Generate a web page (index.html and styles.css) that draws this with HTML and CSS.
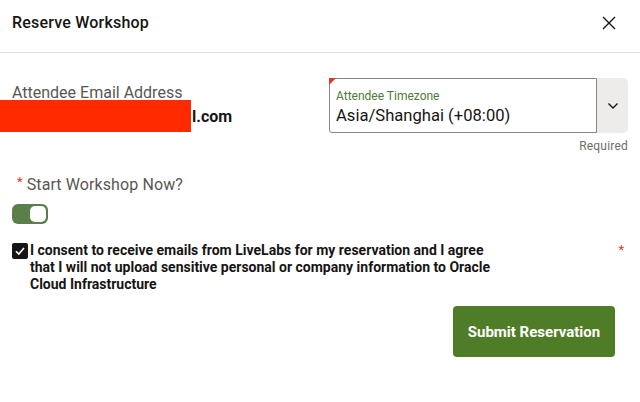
FILE: index.html
```html
<!DOCTYPE html>
<html>
<head>
<meta charset="utf-8">
<link rel="stylesheet" href="styles.css">
</head>
<body>
<div class="dialog">
  <header class="head">
    <h1 class="title">Reserve Workshop</h1>
    <button class="close" aria-label="Close">
      <svg width="16" height="16" viewBox="0 0 16 16"><path d="M2 2 L14 14 M14 2 L2 14" stroke="#161513" stroke-width="1.4" fill="none"/></svg>
    </button>
  </header>
  <div class="body">
    <div class="row1">
      <div class="email">
        <div class="email-label">Attendee Email Address</div>
        <div class="email-value"><span class="redact"></span><span class="email-text">l.com</span></div>
      </div>
      <div class="tz">
        <div class="select">
          <span class="corner"></span>
          <div class="select-main">
            <div class="select-label">Attendee Timezone</div>
            <div class="select-value">Asia/Shanghai (+08:00)</div>
          </div>
          <div class="select-btn">
            <svg width="12" height="8" viewBox="0 0 12 8"><path d="M1.5 1.5 L6 6 L10.5 1.5" stroke="#161513" stroke-width="1.4" fill="none"/></svg>
          </div>
        </div>
        <div class="required">Required</div>
      </div>
    </div>
    <div class="start">
      <div class="start-label"><span class="ast">*</span>Start Workshop Now?</div>
      <div class="toggle"><span class="knob"></span></div>
    </div>
    <div class="consent">
      <span class="check">
        <svg width="16" height="16" viewBox="0 0 16 16"><path d="M4 8.2 L6.8 11 L12 5" stroke="#fff" stroke-width="1.6" fill="none"/></svg>
      </span>
      <div class="consent-text">I consent to receive emails from LiveLabs for my reservation and I agree that I will not upload sensitive personal or company information to Oracle Cloud Infrastructure</div>
      <span class="ast2">*</span>
    </div>
    <div class="actions">
      <button class="submit">Submit Reservation</button>
    </div>
  </div>
</div>
</body>
</html>
```
FILE: styles.css
```css
* { box-sizing: border-box; }
html, body { margin: 0; padding: 0; background: #fff; }
body { font-family: Roboto, "Liberation Sans", sans-serif; color: #161513; width: 640px; height: 402px; overflow: hidden; }
.dialog { display: flex; flex-direction: column; }
.head { height: 53px; border-bottom: 1px solid #e4e1dd; display: flex; align-items: center; justify-content: space-between; padding: 0 12px 7px 12px; }
.title { margin: 0; font-size: 16px; font-weight: 500; letter-spacing: 0.2px; }
.close { border: 0; background: none; padding: 0; width: 16px; height: 16px; margin-right: 11px; display: flex; }
.body { padding: 0 12px; }
.row1 { display: flex; justify-content: space-between; padding-top: 25px; }
.email { padding-top: 5px; }
.email-label { font-size: 16px; color: #5a5752; line-height: 20px; }
.email-value { display: flex; align-items: center; margin-left: -12px; height: 32px; margin-top: -3px; }
.redact { width: 191px; height: 32px; background: #ff2a00; flex: none; }
.email-text { font-weight: 700; font-size: 16px; margin-left: 1px; }
.tz { width: 299px; display: flex; flex-direction: column; align-items: flex-end; }
.select { position: relative; width: 299px; height: 55px; display: flex; }
.corner { position: absolute; left: 0; top: 0; width: 0; height: 0; border-top: 7px solid #d63b25; border-right: 7px solid transparent; }
.select-main { flex: 1; border: 1px solid #8a8782; border-radius: 3px 0 0 3px; padding: 9px 6px 0 6px; }
.select-label { font-size: 12px; color: #4d7a34; line-height: 16px; }
.select-value { font-size: 16.6px; line-height: 22px; margin-top: 1px; }
.select-btn { width: 31px; background: #edecea; border-radius: 0 5px 5px 0; display: flex; align-items: center; justify-content: center; }
.required { font-size: 12px; color: #6f6c67; margin-top: 5px; line-height: 16px; letter-spacing: 0.2px; }
.start { margin-top: 21px; }
.start-label { font-size: 16px; color: #5a5752; line-height: 20px; padding-left: 5px; letter-spacing: 0.1px; }
.ast { color: #d63b25; font-size: 13px; margin-right: 4px; position: relative; top: -4px; }
.toggle { margin-top: 8px; width: 36px; height: 20px; border-radius: 6px; background: #5b7f4a; display: flex; align-items: center; justify-content: flex-end; padding-right: 2px; }
.knob { width: 16px; height: 16px; border-radius: 5px; background: #fff; }
.consent { display: flex; align-items: flex-start; margin-top: 18px; }
.check { width: 16px; height: 16px; background: #161513; border-radius: 2px; flex: none; margin-top: 1px; display: flex; }
.consent-text { font-size: 14px; font-weight: 700; line-height: 17px; margin-left: 2px; width: 470px; letter-spacing: 0px; }
.ast2 { color: #d63b25; margin-left: auto; font-size: 13px; margin-right: 4px; }
.actions { display: flex; justify-content: flex-end; margin-top: 13px; padding-right: 13px; }
.submit { width: 162px; height: 51px; background: #4f7d27; color: #fff; border: 0; border-radius: 4px; font-family: inherit; font-weight: 700; font-size: 15px; }
```
